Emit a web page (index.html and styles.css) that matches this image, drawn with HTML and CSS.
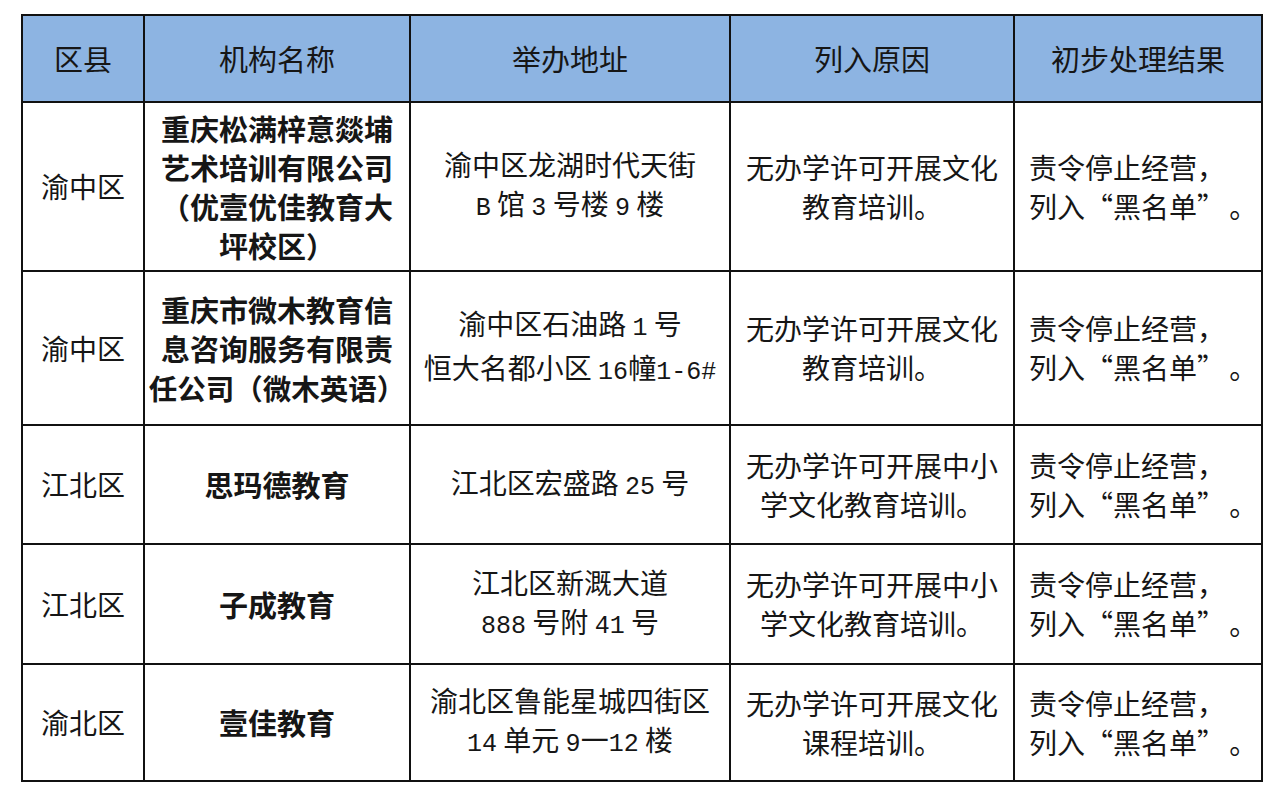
FILE: index.html
```html
<!DOCTYPE html>
<html lang="zh-CN">
<head>
<meta charset="utf-8">
<title>名单</title>
<link rel="stylesheet" href="styles.css">
</head>
<body>
<table class="list">
  <colgroup>
    <col class="c1"><col class="c2"><col class="c3"><col class="c4"><col class="c5">
  </colgroup>
  <thead>
    <tr class="head">
      <th>区县</th><th>机构名称</th><th>举办地址</th><th>列入原因</th><th>初步处理结果</th>
    </tr>
  </thead>
  <tbody>
    <tr class="r1">
      <td>渝中区</td>
      <td class="name">重庆松满梓意燚埔<br>艺术培训有限公司<br>（优壹优佳教育大<br>坪校区）</td>
      <td>渝中区龙湖时代天街<br><span class="num">B</span> 馆 <span class="num">3</span> 号楼 <span class="num">9</span> 楼</td>
      <td>无办学许可开展文化<br>教育培训。</td>
      <td class="res">责令停止经营，<br>列入<span class="ql">“</span>黑名单<span class="qr">”</span>。</td>
    </tr>
    <tr class="r2">
      <td>渝中区</td>
      <td class="name">重庆市微木教育信<br>息咨询服务有限责<br><span class="tight">任公司（微木英语）</span></td>
      <td>渝中区石油路 <span class="num">1</span> 号<br>恒大名都小区 <span class="num">16</span>幢<span class="num">1-6#</span></td>
      <td>无办学许可开展文化<br>教育培训。</td>
      <td class="res">责令停止经营，<br>列入<span class="ql">“</span>黑名单<span class="qr">”</span>。</td>
    </tr>
    <tr class="r3">
      <td>江北区</td>
      <td class="name">思玛德教育</td>
      <td>江北区宏盛路 <span class="num">25</span> 号</td>
      <td>无办学许可开展中小<br>学文化教育培训。</td>
      <td class="res">责令停止经营，<br>列入<span class="ql">“</span>黑名单<span class="qr">”</span>。</td>
    </tr>
    <tr class="r4">
      <td>江北区</td>
      <td class="name">子成教育</td>
      <td>江北区新溉大道<br><span class="num">888</span> 号附 <span class="num">41</span> 号</td>
      <td>无办学许可开展中小<br>学文化教育培训。</td>
      <td class="res">责令停止经营，<br>列入<span class="ql">“</span>黑名单<span class="qr">”</span>。</td>
    </tr>
    <tr class="r5">
      <td>渝北区</td>
      <td class="name">壹佳教育</td>
      <td>渝北区鲁能星城四街区<br><span class="num">14</span> 单元 <span class="num">9</span>一<span class="num">12</span> 楼</td>
      <td>无办学许可开展文化<br>课程培训。</td>
      <td class="res">责令停止经营，<br>列入<span class="ql">“</span>黑名单<span class="qr">”</span>。</td>
    </tr>
  </tbody>
</table>
</body>
</html>
```

FILE: styles.css
```css
html, body {
  margin: 0;
  background: #ffffff;
}
body {
  padding: 14px 0 0 21px;
  font-family: "Noto Sans CJK SC", "Noto Sans", sans-serif;
  color: #161616;
}
.list {
  border-collapse: collapse;
  table-layout: fixed;
  width: 1240px;
  font-size: 28px;
  line-height: 39px;
}
.c1 { width: 122px; }
.c2 { width: 266px; }
.c3 { width: 320px; }
.c4 { width: 284px; }
.c5 { width: 248px; }
.list th, .list td {
  border: 2px solid #111;
  text-align: center;
  vertical-align: middle;
  padding: 0;
}
.list th {
  background: #8db4e2;
  font-weight: 400;
  font-size: 29px;
}
.head { height: 87px; }
.r1 { height: 169px; }
.r2 { height: 154px; }
.r3 { height: 119px; }
.r4 { height: 120px; }
.r5 { height: 117px; }
.list td.name {
  font-weight: 700;
  font-size: 29px;
  white-space: nowrap;
  padding: 0;
}
.tight {
  font-size: 28.5px;
}
.list td.res {
  text-align: left;
  padding-left: 14px;
  white-space: nowrap;
}
.ql, .qr {
  display: inline-block;
  width: 1em;
}
.ql { text-align: right; }
.qr { text-align: left; margin-right: 0.15em; }
.num {
  font-family: "Liberation Mono", "DejaVu Sans Mono", monospace;
  font-size: 25px;
}
```
